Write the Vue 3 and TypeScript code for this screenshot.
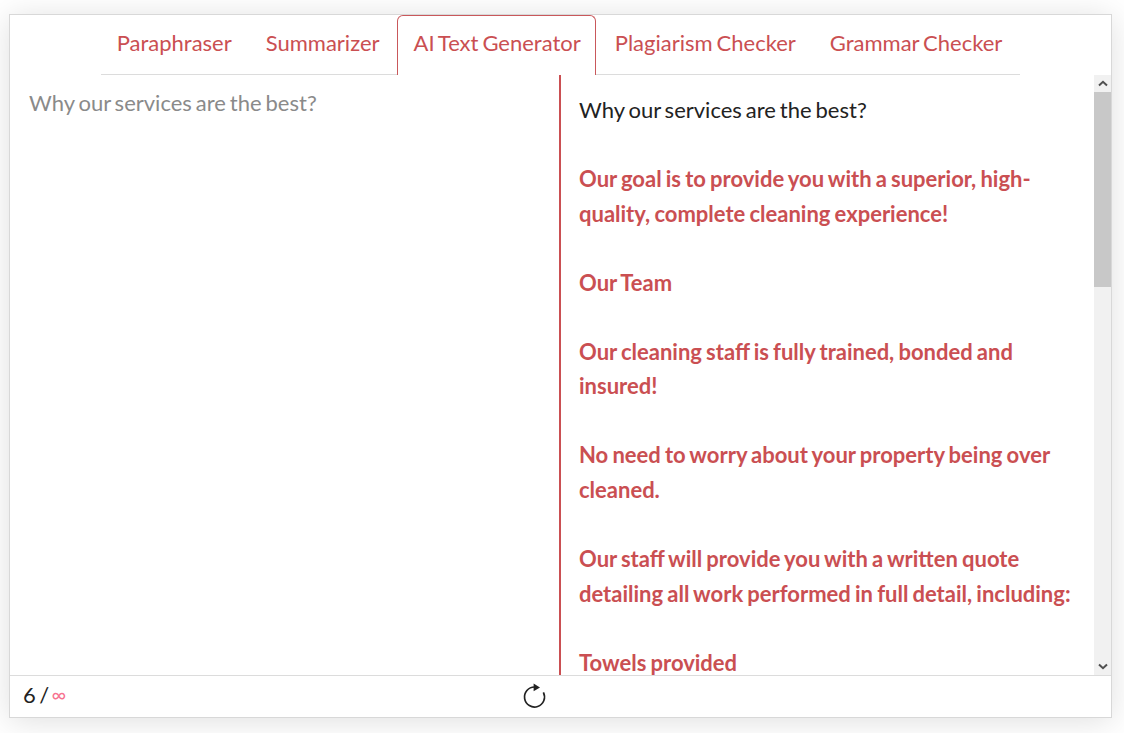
<template>
  <div class="page">
    <div class="card">
      <nav class="tabs">
        <div class="tab-list">
          <a
            v-for="tab in tabs"
            :key="tab"
            class="tab"
            :class="{ active: tab === activeTab }"
          >{{ tab }}</a>
        </div>
      </nav>

      <div class="panes">
        <div class="input-pane">{{ prompt }}</div>
        <div class="output-pane">
          <div class="output">
            <p class="prompt">{{ prompt }}</p>
            <p v-for="(para, i) in generated" :key="i" class="generated">{{ para }}</p>
          </div>
          <div class="scrollbar">
            <div class="arrow">
              <svg width="10" height="7" viewBox="0 0 10 7"><path d="M1 5.5 5 1.8 9 5.5" fill="none" stroke="#505050" stroke-width="2" /></svg>
            </div>
            <div class="thumb"></div>
            <div class="track"></div>
            <div class="arrow">
              <svg width="10" height="7" viewBox="0 0 10 7"><path d="M1 1.5 5 5.2 9 1.5" fill="none" stroke="#505050" stroke-width="2" /></svg>
            </div>
          </div>
        </div>
      </div>

      <footer class="footer">
        <div class="count">6 / <span class="infinity">∞</span></div>
        <button class="regen" aria-label="Regenerate">
          <svg width="24" height="28" viewBox="0 0 24 28">
            <path d="M11.5 4A10 10 0 1 0 20.4 9.4" fill="none" stroke="#222" stroke-width="1.7" />
            <path d="M10.6 0.4 17 4.4 10.6 8.2Z" fill="#222" />
          </svg>
        </button>
      </footer>
    </div>
  </div>
</template>

<script setup lang="ts">
const tabs = ['Paraphraser', 'Summarizer', 'AI Text Generator', 'Plagiarism Checker', 'Grammar Checker']
const activeTab = 'AI Text Generator'
const prompt = 'Why our services are the best?'
const generated = [
  'Our goal is to provide you with a superior, high-quality, complete cleaning experience!',
  'Our Team',
  'Our cleaning staff is fully trained, bonded and insured!',
  'No need to worry about your property being over cleaned.',
  'Our staff will provide you with a written quote detailing all work performed in full detail, including:',
  'Towels provided',
]
</script>

<style>
html,
body {
  margin: 0;
  background: #fff;
}
</style>

<style scoped>
.page {
  box-sizing: border-box;
  width: 1124px;
  height: 733px;
  padding: 14px 12px 15px 9px;
  overflow: hidden;
  font-family: Lato, "Liberation Sans", sans-serif;
  word-spacing: -1.7px;
}

.card {
  box-sizing: border-box;
  display: flex;
  flex-direction: column;
  height: 704px;
  background: #fff;
  border: 1px solid #d8d8d8;
  box-shadow: 0 3px 30px rgba(0, 0, 0, 0.13);
}

.tabs {
  display: flex;
  justify-content: center;
  flex: none;
  height: 60px;
}

.tab-list {
  display: flex;
  box-sizing: border-box;
  height: 60px;
  width: 919px;
  padding-right: 2px;
  justify-content: center;
  border-bottom: 1px solid #dcdcdc;
}

.tab {
  box-sizing: border-box;
  height: 60px;
  padding: 0 16px;
  font-size: 22px;
  line-height: 54px;
  color: #ca4f52;
  border: 1px solid transparent;
  border-bottom: none;
  white-space: nowrap;
}

.tab.active {
  padding-right: 14px;
  margin-right: 2px;
  background: #fff;
  border-color: #c9585b;
  border-radius: 6px 6px 0 0;
}

.panes {
  display: flex;
  flex: 1;
  min-height: 0;
}

.input-pane {
  box-sizing: border-box;
  width: 549px;
  flex: none;
  padding: 11px 19px;
  font-size: 22px;
  line-height: 34.5px;
  color: #8a8a8a;
}

.output-pane {
  display: flex;
  flex: 1;
  min-width: 0;
  border-left: 2px solid #ca4f52;
}

.output {
  flex: 1;
  min-width: 0;
  overflow: hidden;
  padding: 18px 18px 0;
  font-size: 22px;
  line-height: 34.54px;
}

.output p {
  margin: 0 0 34.54px;
}

.prompt {
  color: #222;
}

.generated {
  font-weight: 700;
  color: #ca4f52;
  word-spacing: -1.2px;
}

.scrollbar {
  display: flex;
  flex-direction: column;
  flex: none;
  width: 17px;
  background: #f1f1f1;
}

.arrow {
  display: flex;
  align-items: center;
  justify-content: center;
  flex: none;
  height: 17px;
}

.thumb {
  flex: none;
  height: 195px;
  background: #c8c8c8;
}

.track {
  flex: 1;
}

.footer {
  display: grid;
  grid-template-columns: 513px auto 1fr;
  align-items: center;
  flex: none;
  height: 41px;
  border-top: 1px solid #dcdcdc;
}

.count {
  padding-left: 13px;
  padding-bottom: 5px;
  font-size: 22px;
  word-spacing: -2.2px;
  color: #222;
}

.infinity {
  margin-left: -1px;
  font-size: 20px;
  vertical-align: 1px;
  color: #f7728f;
}

.regen {
  display: flex;
  padding: 0;
  border: none;
  background: none;
}
</style>
